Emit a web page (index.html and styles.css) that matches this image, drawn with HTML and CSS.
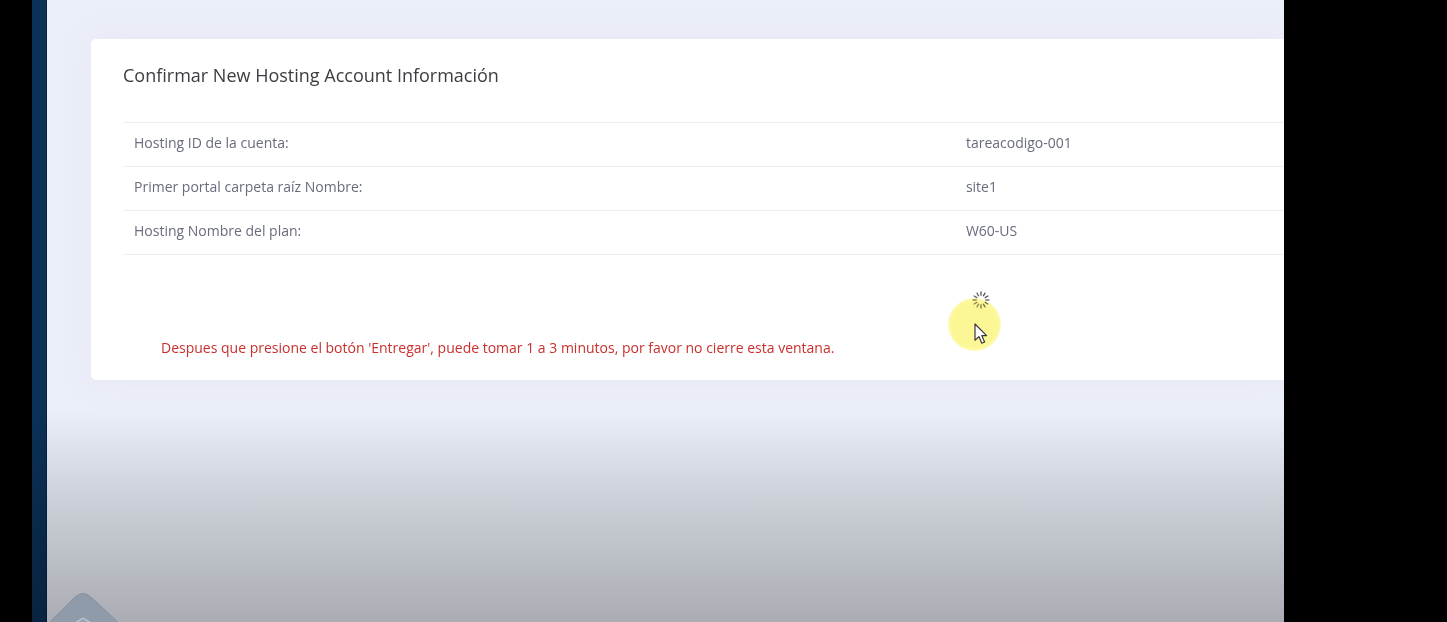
FILE: index.html
```html
<!DOCTYPE html>
<html lang="es">
<head>
<meta charset="utf-8">
<title>Confirmar New Hosting Account</title>
<link rel="stylesheet" href="styles.css">
</head>
<body>
<div class="screen">
  <aside class="rail"></aside>
  <main class="content">
    <section class="card">
      <h1 class="title">Confirmar New Hosting Account Información</h1>
      <table class="details">
        <tbody>
          <tr><th scope="row">Hosting ID de la cuenta:</th><td>tareacodigo-001</td></tr>
          <tr><th scope="row">Primer portal carpeta raíz Nombre:</th><td>site1</td></tr>
          <tr><th scope="row">Hosting Nombre del plan:</th><td>W60-US</td></tr>
        </tbody>
      </table>
      <div class="progress">
        <div class="busy">
          <svg class="spinner" viewBox="-9 -9 18 18" role="img" aria-label="Cargando">
            <g stroke-width="1.3" stroke-linecap="round">
              <path stroke="#555" d="M0-4.8V-8M2.4-4.2L4-6.9M4.2-2.4L6.9-4"/>
              <path stroke="#777" d="M4.8 0H8M4.2 2.4L6.9 4M2.4 4.2L4 6.9M0 4.8V8"/>
              <path stroke="#8d8d88" d="M-2.4 4.2L-4 6.9M-4.2 2.4L-6.9 4M-4.8 0H-8"/>
              <path stroke="#666" d="M-4.2-2.4L-6.9-4M-2.4-4.2L-4-6.9"/>
            </g>
          </svg>
          <span class="halo"></span>
          <svg class="pointer" viewBox="0 0 14 22" aria-hidden="true">
            <path d="M1 1V17.2L4.9 13.6L7.8 20.2L10.6 19L7.8 12.6H12.6Z" fill="#fff" stroke="#3b3540" stroke-width="1.2" stroke-linejoin="round"/>
          </svg>
        </div>
      </div>
      <p class="warning">Despues que presione el botón 'Entregar', puede tomar 1 a 3 minutos, por favor no cierre esta ventana.</p>
    </section>
  </main>
  <div class="shade"></div>
  <svg class="badge" viewBox="0 0 72 30" aria-hidden="true">
    <path d="M0 32L26 6Q35-3 44 6L72 32Z" fill="#8f9ba8" stroke="#8792a0"/>
    <path d="M24 33L32 28Q35 25 38 28L46 33" fill="#98a4b1" stroke="#b9c3cd" stroke-width="1.5"/>
  </svg>
</div>
</body>
</html>
```
FILE: styles.css
```css
* {
  box-sizing: border-box;
}

body {
  margin: 0;
  background: #000;
  color: #686c7c;
  font: 14px/20px "Open Sans", "Noto Sans", sans-serif;
}

.screen {
  position: relative;
  display: flex;
  min-height: 100vh;
  margin: 0 163px 0 32px;
  overflow: hidden;
  background: #ebeff8;
}

.rail {
  flex: 0 0 15px;
  background: #0b3157;
  border-right: 1px solid #082344;
}

.content {
  flex: 1;
  min-width: 0;
  padding: 39px 0 0 44px;
}

.card {
  padding: 24px 0 22px 32px;
  background: #fff;
  border-radius: 5px 0 0 5px;
  box-shadow: 0 0 32px 4px #e8e7f6;
}

.title {
  margin: 0 0 35px;
  color: #3c3c41;
  font-size: 18px;
  font-weight: 400;
  line-height: 24px;
}

.details {
  width: 100%;
  border-collapse: collapse;
  border-bottom: 1px solid #edeef2;
}

.details th,
.details td {
  height: 44px;
  padding: 0 11px 4px;
  border-top: 1px solid #edeef2;
  font-weight: 400;
  text-align: left;
}

.details th {
  width: 72%;
}

.details td {
  padding-left: 7px;
}

.progress {
  display: flex;
  justify-content: flex-end;
  padding: 36px 294px 0 0;
}

.busy {
  position: relative;
  height: 47px;
}

.spinner {
  display: block;
  width: 18px;
  height: 18px;
}

.halo {
  position: absolute;
  top: 7px;
  left: -24px;
  width: 53px;
  height: 53px;
  border-radius: 50%;
  background: radial-gradient(#fcf795 0 60%, #fdf9a8 68%, #fefbc8 71%);
  mix-blend-mode: multiply;
}

.pointer {
  position: absolute;
  top: 32px;
  left: 2px;
  width: 14px;
  height: 22px;
}

.warning {
  margin: 0;
  padding-left: 38px;
  color: #c9302c;
}

.shade {
  position: absolute;
  inset: 0;
  background: linear-gradient(transparent 66%, rgba(0, 0, 0, 0.13) 80%, rgba(0, 0, 0, 0.28));
  pointer-events: none;
}

.badge {
  position: absolute;
  bottom: 0;
  left: 16px;
  width: 72px;
  height: 30px;
}
```
